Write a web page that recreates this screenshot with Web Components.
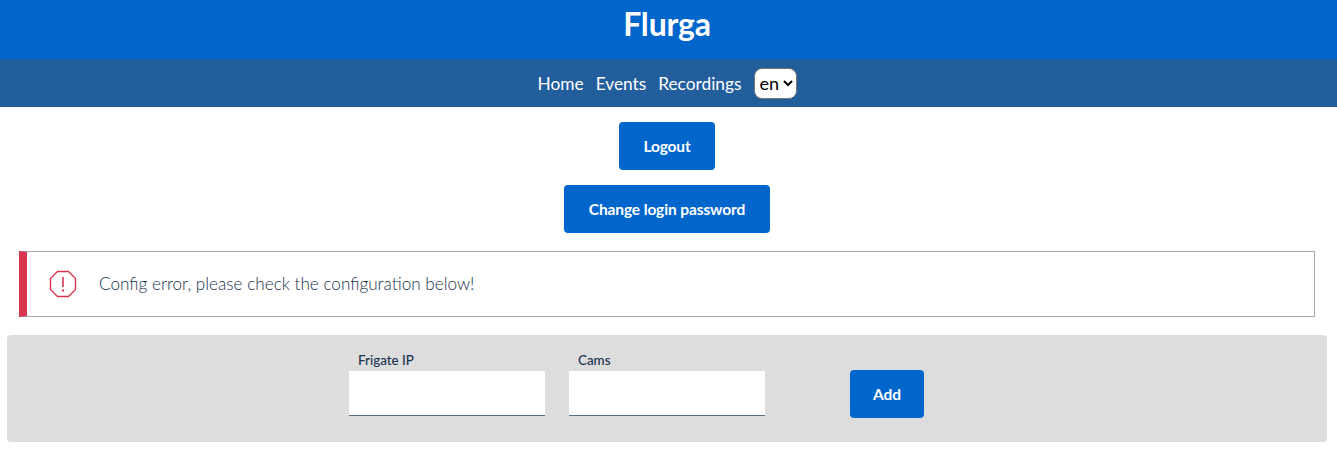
<!DOCTYPE html>
<html>
<head>
<meta charset="utf-8">
<title>Flurga</title>
<style>
body {
    margin: 0;
    background: #fff;
    font-family: "Lato", "Liberation Sans", sans-serif;
    color: #19324d;
}
</style>
</head>
<body>
<flurga-header title-text="Flurga"></flurga-header>
<flurga-nav>
    <span>Home</span>
    <span>Events</span>
    <span>Recordings</span>
</flurga-nav>
<flurga-actions>
    <flurga-button style="width: 96px">Logout</flurga-button>
    <flurga-button style="width: 206px">Change login password</flurga-button>
</flurga-actions>
<flurga-alert>Config error, please check the configuration below!</flurga-alert>
<flurga-config>
    <flurga-field label="Frigate IP"></flurga-field>
    <flurga-field label="Cams"></flurga-field>
    <flurga-button slot="action" style="width: 74px">Add</flurga-button>
</flurga-config>

<script>
class FlurgaHeader extends HTMLElement {
    constructor() {
        super();
        this.attachShadow({mode: 'open'});
        this.shadowRoot.innerHTML = `
        <style>
        :host {
            display: flex;
            justify-content: center;
            height: 59px;
            padding-right: 3px;
            box-sizing: border-box;
            background: #0066cc;
        }
        h1 {
            margin: 0;
            padding-top: 4px;
            font-size: 32px;
            line-height: 40px;
            font-weight: 700;
            letter-spacing: -0.2px;
            color: #fff;
        }
        </style>
        <h1>${this.getAttribute('title-text')}</h1>
        `;
    }
}

class FlurgaNav extends HTMLElement {
    constructor() {
        super();
        this.attachShadow({mode: 'open'});
        this.shadowRoot.innerHTML = `
        <style>
        :host {
            display: flex;
            justify-content: center;
            align-items: center;
            gap: 12px;
            box-sizing: border-box;
            height: 48px;
            padding-right: 2px;
            background: #225d9c;
            color: #fff;
            font-size: 17.3px;
        }
        ::slotted(span) {
            color: #fff;
        }
        select {
            box-sizing: border-box;
            width: 43px;
            height: 31px;
            margin-left: 1px;
            padding: 0;
            background: #fff;
            border: 1px solid #767676;
            border-radius: 8px;
            color: #000;
            font: inherit;
            font-size: 18px;
        }
        </style>
        <slot></slot>
        <select><option>en</option></select>
        `;
    }
}

class FlurgaActions extends HTMLElement {
    constructor() {
        super();
        this.attachShadow({mode: 'open'});
        this.shadowRoot.innerHTML = `
        <style>
        :host {
            display: flex;
            flex-direction: column;
            align-items: center;
            gap: 15px;
            padding: 15px 3px 0 0;
        }
        </style>
        <slot></slot>
        `;
    }
}

class FlurgaButton extends HTMLElement {
    constructor() {
        super();
        this.attachShadow({mode: 'open'});
        this.shadowRoot.innerHTML = `
        <style>
        :host {
            display: flex;
            justify-content: center;
            align-items: center;
            box-sizing: border-box;
            height: 48px;
            padding-bottom: 1px;
            background: #0066cc;
            border-radius: 4px;
            color: #fff;
            font-size: 15.5px;
            font-weight: 700;
            letter-spacing: -0.12px;
            white-space: nowrap;
        }
        </style>
        <slot></slot>
        `;
    }
}

class FlurgaAlert extends HTMLElement {
    constructor() {
        super();
        this.attachShadow({mode: 'open'});
        this.shadowRoot.innerHTML = `
        <style>
        :host {
            display: flex;
            align-items: center;
            box-sizing: border-box;
            height: 66px;
            margin: 18px 22px 18px 19px;
            padding-left: 21px;
            padding-bottom: 2px;
            border: 1px solid #a9a9a9;
            border-left: 8px solid #d9364f;
            color: #19324d;
            font-size: 17.15px;
            font-weight: 300;
        }
        svg {
            width: 30px;
            height: 30px;
            margin-right: 21px;
            margin-top: 2px;
            flex: none;
        }
        </style>
        <svg viewBox="0 0 30 30">
            <path d="M9.5 2.5h11l7 7v11l-7 7h-11l-7-7v-11z" fill="none" stroke="#d9364f" stroke-width="1.4"/>
            <path d="M15 8v10" stroke="#d9364f" stroke-width="1.6"/>
            <path d="M15 20.5v2" stroke="#d9364f" stroke-width="2"/>
        </svg>
        <slot></slot>
        `;
    }
}

class FlurgaConfig extends HTMLElement {
    constructor() {
        super();
        this.attachShadow({mode: 'open'});
        this.shadowRoot.innerHTML = `
        <style>
        :host {
            display: block;
            box-sizing: border-box;
            height: 107px;
            margin: 0 10px 0 7px;
            padding-top: 17px;
            background: #dddddd;
            border-radius: 4px;
        }
        .grid {
            display: grid;
            grid-template-columns: repeat(3, 196px);
            justify-content: center;
            gap: 24px;
        }
        .action {
            display: flex;
            justify-content: center;
            padding-top: 18px;
        }
        </style>
        <div class="grid">
            <slot></slot>
            <div class="action"><slot name="action"></slot></div>
        </div>
        `;
    }
}

class FlurgaField extends HTMLElement {
    constructor() {
        super();
        this.attachShadow({mode: 'open'});
        this.shadowRoot.innerHTML = `
        <style>
        :host {
            display: block;
        }
        label {
            display: block;
            height: 19px;
            padding-left: 9px;
            font-size: 13.4px;
            line-height: 17px;
            font-weight: 500;
            color: #19324d;
        }
        input {
            display: block;
            box-sizing: border-box;
            width: 100%;
            height: 45px;
            padding: 0;
            border: 0;
            border-bottom: 1px solid #5c6f82;
            background: #fff;
            outline: none;
        }
        </style>
        <label>${this.getAttribute('label')}</label>
        <input type="text">
        `;
    }
}

customElements.define('flurga-header', FlurgaHeader);
customElements.define('flurga-nav', FlurgaNav);
customElements.define('flurga-actions', FlurgaActions);
customElements.define('flurga-button', FlurgaButton);
customElements.define('flurga-alert', FlurgaAlert);
customElements.define('flurga-config', FlurgaConfig);
customElements.define('flurga-field', FlurgaField);
</script>
</body>
</html>
